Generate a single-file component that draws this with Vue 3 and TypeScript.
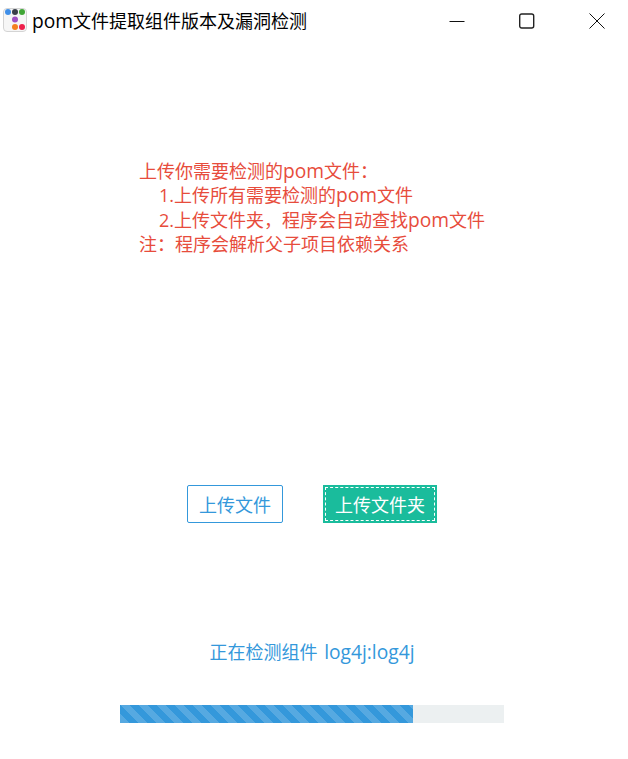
<script setup lang="ts">
interface Line {
  before: string
  latin: string
  after: string
  indent: boolean
}
const lines: Line[] = [
  { before: '上传你需要检测的', latin: 'pom', after: '文件：', indent: false },
  { before: '1.上传所有需要检测的', latin: 'pom', after: '文件', indent: true },
  { before: '2.上传文件夹，程序会自动查找', latin: 'pom', after: '文件', indent: true },
  { before: '注：程序会解析父子项目依赖关系', latin: '', after: '', indent: false },
]
</script>

<template>
  <div class="window">
    <header class="titlebar">
      <svg class="logo" width="24" height="24" viewBox="0 0 24 24">
        <rect x="0.5" y="0.5" width="23" height="23" rx="3.5" fill="#f6f6f6" stroke="#d4d4d4" />
        <circle cx="5" cy="4" r="3" fill="#3f8fe8" />
        <circle cx="12" cy="4" r="3" fill="#3a3f4a" />
        <circle cx="19" cy="4" r="3" fill="#3fa535" />
        <circle cx="12" cy="11.5" r="3" fill="#a04fc4" />
        <circle cx="12" cy="19" r="3" fill="#f5801f" />
        <circle cx="19" cy="19" r="3" fill="#ee1f4b" />
      </svg>
      <span class="title"><span class="latin">pom</span>文件提取组件版本及漏洞检测</span>
      <div class="controls">
        <svg width="16" height="16" viewBox="0 0 16 16"><path d="M0.5 8.5h15" stroke="#111" fill="none" /></svg>
        <svg width="16" height="16" viewBox="0 0 16 16"><rect x="0.7" y="1" width="14" height="14" rx="2" stroke="#222" stroke-width="1.4" fill="none" /></svg>
        <svg width="16" height="16" viewBox="0 0 16 16"><path d="M0.5 0.5l15 15M15.5 0.5l-15 15" stroke="#111" fill="none" /></svg>
      </div>
    </header>
    <main class="content">
      <div class="notes">
        <div v-for="line in lines" :key="line.before" class="note" :class="{ indent: line.indent }">{{ line.before }}<span class="latin">{{ line.latin }}</span>{{ line.after }}</div>
      </div>
      <div class="actions">
        <button class="btn">上传文件</button>
        <button class="btn primary">上传文件夹</button>
      </div>
      <div class="status">正在检测组件 <span class="latin">log4j:log4j</span></div>
      <div class="track"><div class="bar" :style="{ width: '76.3%' }"></div></div>
    </main>
  </div>
</template>

<style scoped>
.window {
  width: 628px;
  height: 759px;
  background: #fff;
  font-family: "Open Sans", "Noto Sans CJK SC", sans-serif;
  display: flex;
  flex-direction: column;
  overflow: hidden;
}
.latin { font-size: 19.2px; }
.titlebar {
  height: 42px;
  display: flex;
  align-items: center;
  padding-left: 3px;
  flex: none;
}
.logo { flex: none; align-self: flex-start; margin-top: 8px; }
.title {
  margin-left: 5px;
  font-size: 18px;
  line-height: 24px;
  color: #000;
  white-space: nowrap;
}
.controls {
  margin-left: auto;
  width: 156px;
  margin-right: 23px;
  display: flex;
  justify-content: space-between;
}
.content {
  flex: 1;
  display: flex;
  flex-direction: column;
  align-items: center;
  padding-right: 4px;
}
.notes {
  align-self: flex-start;
  margin: 117px 0 0 139px;
  color: #e74c3c;
  font-size: 18px;
}
.note { height: 24.3px; line-height: 24.3px; white-space: nowrap; }
.indent { padding-left: 20px; }
.actions {
  display: flex;
  gap: 40px;
  margin-top: 228.8px;
}
.btn {
  height: 38px;
  padding: 0 11px;
  font: inherit;
  font-size: 18px;
  color: #3498db;
  background: #fff;
  border: 1px solid #3498db;
  border-radius: 2px;
}
.primary {
  color: #fff;
  background: #1abc9c;
  border-color: #1abc9c;
  border-radius: 0;
  outline: 1px dashed #fff;
  outline-offset: -3px;
}
.status {
  margin-top: 116px;
  height: 26px;
  color: #3498db;
  font-size: 18px;
  line-height: 26px;
  word-spacing: 2px;
}
.track {
  width: 384px;
  height: 18px;
  margin-top: 40px;
  background: #ecf0f1;
}
.bar {
  height: 100%;
  background-color: #3498db;
  background-image: linear-gradient(45deg, rgba(255,255,255,.17) 25%, transparent 25%, transparent 50%, rgba(255,255,255,.17) 50%, rgba(255,255,255,.17) 75%, transparent 75%, transparent);
  background-size: 18px 18px;
}
</style>
